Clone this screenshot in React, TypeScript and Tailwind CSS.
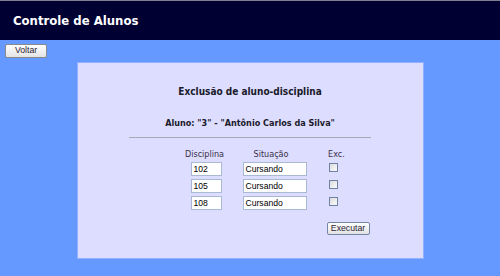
const tahoma = { fontFamily: '"DejaVu Sans Condensed", "DejaVu Sans", sans-serif' };

const rows = [
  { disciplina: '102', situacao: 'Cursando' },
  { disciplina: '105', situacao: 'Cursando' },
  { disciplina: '108', situacao: 'Cursando' },
];

function FakeInput({ value, className }: { value: string; className: string }) {
  return (
    <div
      className={`h-[14px] border border-[#a9b8d3] bg-white pl-[2px] text-[8.6px] leading-[12px] text-black font-['Liberation_Sans',sans-serif] ${className}`}
    >
      {value}
    </div>
  );
}

function Check() {
  return (
    <div className="h-[9px] w-[9px] border border-[#6f82a6] bg-gradient-to-br from-[#dcdcdc] to-[#fbfbfb]" />
  );
}

export default function App() {
  return (
    <div className="flex h-[276px] w-[500px] flex-col bg-[#6699ff]" style={tahoma}>
      {/* Header */}
      <div className="flex h-[40px] items-center border-t border-[#7f7f8f] bg-[#000033] pl-[13px]">
        <span className="text-[13px] font-bold text-white">Controle de Alunos</span>
      </div>

      <div className="pl-[5px] pt-[4px]">
        <button className="flex h-[14px] w-[42px] items-center justify-center rounded-[2px] border border-[#8a8a8a] bg-gradient-to-b from-white to-[#e4e4e4] text-[8.7px] text-[#2a2233] font-['Liberation_Sans',sans-serif]">
          Voltar
        </button>
      </div>

      {/* Panel */}
      <div className="mx-auto mt-[4px] flex h-[197px] w-[347px] flex-col border border-[#8fb0ff] bg-[#ddddff]">
        <div className="mt-[22px] text-center text-[10px] font-bold leading-[14px] text-[#1a1a2a]">
          Exclusão de aluno-disciplina
        </div>
        <div className="mt-[17px] text-center text-[9px] font-bold leading-[14px] text-[#1a1a2a]">
          Aluno: "3" - "Antônio Carlos da Silva"
        </div>
        <div className="mx-auto mt-[7px] h-0 w-[242px] border-t border-[#a9a9b4]" />

        <div className="ml-[103px] mt-[9px] grid grid-cols-[48px_85px_46px] text-[9px] text-[#3a3048]">
          <div className="text-center leading-[14px]">Disciplina</div>
          <div className="text-center leading-[14px]">Situação</div>
          <div className="text-center leading-[14px]">Exc.</div>
          <div className="col-span-3 h-px" />
          {rows.map((r) => (
            <div key={r.disciplina} className="col-span-3 grid h-[17px] grid-cols-[48px_85px_46px]">
              <FakeInput value={r.disciplina} className="ml-[10px] w-[31px]" />
              <FakeInput value={r.situacao} className="ml-[14px] w-[64px]" />
              <div className="ml-[15px] pt-px">
                <Check />
              </div>
            </div>
          ))}
        </div>

        <div className="ml-[249px] mt-[9px]">
          <button className="flex h-[13px] w-[43px] items-center justify-center rounded-[2px] border border-[#7386a8] bg-gradient-to-b from-white to-[#e2e2e2] text-[8.7px] text-[#2a2233] font-['Liberation_Sans',sans-serif]">
            Executar
          </button>
        </div>
      </div>
    </div>
  );
}
